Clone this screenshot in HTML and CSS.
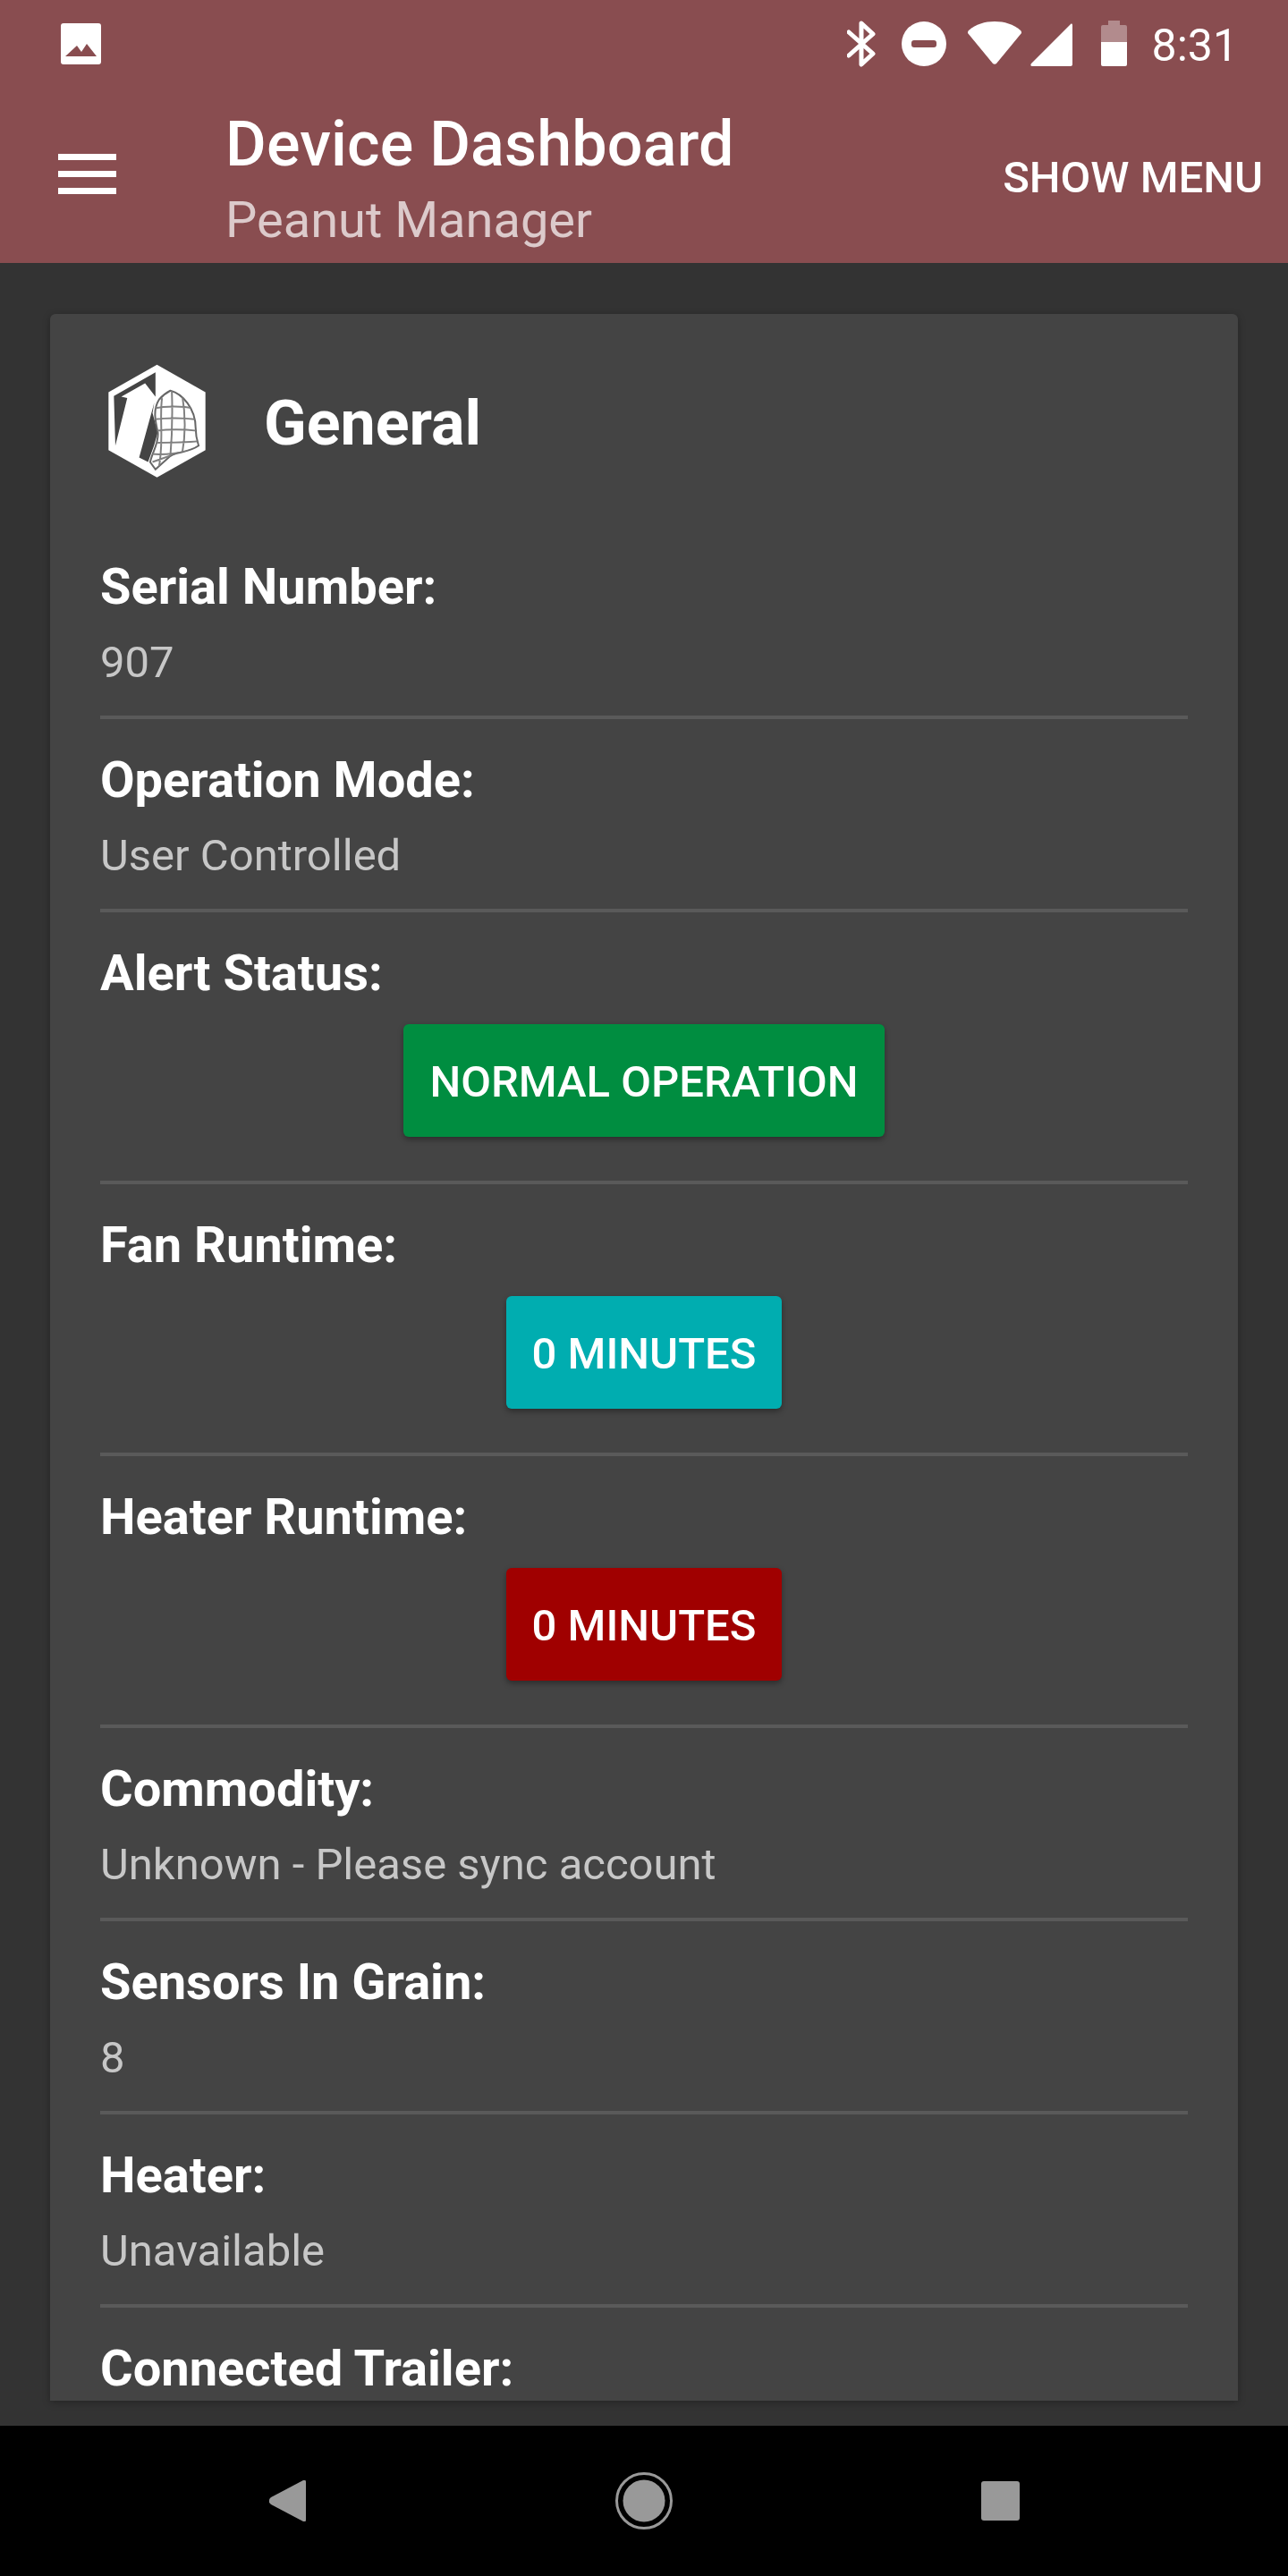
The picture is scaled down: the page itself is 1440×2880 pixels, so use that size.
FILE: index.html
```html
<!DOCTYPE html>
<html lang="en">
<head>
  <meta charset="UTF-8">
  <meta name="viewport" content="width=device-width, initial-scale=1.0">
  <title>Device Dashboard</title>
  <link rel="stylesheet" href="styles.css">
</head>
<body>
  <header class="app-header">
    <div class="status-bar">
      <svg class="status-photo" viewBox="0 0 45 46">
        <path fill="#fff" fill-rule="evenodd" d="M3 0h39a3 3 0 0 1 3 3v40a3 3 0 0 1-3 3H3a3 3 0 0 1-3-3V3a3 3 0 0 1 3-3zM5 37h35L29 23l-6 9-5-7z"/>
      </svg>
      <svg class="status-icons" viewBox="947 0 313 84">
        <path fill="none" stroke="#fff" stroke-width="5" stroke-linejoin="round" stroke-linecap="round" d="M949 36l27 24-13 12V26l13 12-27 24"/>
        <ellipse cx="1033" cy="49" rx="25" ry="25" fill="#fff"/>
        <rect x="1019" y="45" width="28" height="8" rx="3" fill="#894d50"/>
        <path fill="#fff" d="M1112 24c-11 0-21 3-29 10-1 1-1 2-1 3l28 34c1 1 3 1 4 0l28-34c0-1 0-2-1-3-8-7-18-10-29-10z"/>
        <path fill="#fff" d="M1197 27c1-1 2 0 2 1v44c0 1-1 2-2 2h-43c-2 0-2-2-1-3z"/>
        <path fill="#fff" fill-opacity=".35" d="M1239 23h13v5h6a2 2 0 0 1 2 2v17h-29V30a2 2 0 0 1 2-2h6z"/>
        <path fill="#fff" d="M1231 47h29v25a2 2 0 0 1-2 2h-25a2 2 0 0 1-2-2z"/>
      </svg>
      <span class="status-time">8:31</span>
    </div>
    <div class="toolbar">
      <div class="hamburger"><span></span><span></span><span></span></div>
      <div class="toolbar-titles">
        <h1>Device Dashboard</h1>
        <p>Peanut Manager</p>
      </div>
      <a class="toolbar-action" href="#">SHOW MENU</a>
    </div>
  </header>

  <main class="content">
    <section class="card">
      <div class="card-head">
        <svg class="card-logo" viewBox="85 70 340 390">
          <defs>
            <clipPath id="net-clip">
              <path d="M300 165c40 10 85 60 85 125 0 20 5 45 10 60-35 25-75 20-95 35l-50 45-18-25c8-35 30-65 26-100-8-35-18-75 4-110 13-15 28-25 38-30z"/>
            </clipPath>
          </defs>
          <path fill="#fff" d="M255 78l163 92v195l-163 92-163-92V170z"/>
          <path fill="#444" d="M110 183l140-80v82l-35-45-80 45 20 5-40 160z"/>
          <path fill="#444" d="M246 205l-6 35 18 65-13 45-20 55-30-15z"/>
          <path fill="#fff" stroke="#666" stroke-width="6" d="M300 165c40 10 85 60 85 125 0 20 5 45 10 60-35 25-75 20-95 35l-50 45-18-25c8-35 30-65 26-100-8-35-18-75 4-110 13-15 28-25 38-30z"/>
          <g clip-path="url(#net-clip)">
            <path fill="none" stroke="#808080" stroke-width="6" d="M240 225c45-8 100-8 145 0M240 262c50-6 100-6 150 0M250 300c45-5 95-5 140 0M250 340c45 0 95 0 145-5M235 378c40 3 80 0 125-10M240 405l70-25M305 165c2 60 2 140-5 220M272 190c-10 70 8 150-12 240M340 180c10 60 12 130 0 195"/>
          </g>
        </svg>
        <h2>General</h2>
      </div>

      <div class="row">
        <div class="row-label">Serial Number:</div>
        <div class="row-value">907</div>
      </div>
      <div class="row">
        <div class="row-label">Operation Mode:</div>
        <div class="row-value">User Controlled</div>
      </div>
      <div class="row">
        <div class="row-label">Alert Status:</div>
        <div class="badge badge-green">NORMAL OPERATION</div>
      </div>
      <div class="row">
        <div class="row-label">Fan Runtime:</div>
        <div class="badge badge-teal">0 MINUTES</div>
      </div>
      <div class="row">
        <div class="row-label">Heater Runtime:</div>
        <div class="badge badge-red">0 MINUTES</div>
      </div>
      <div class="row">
        <div class="row-label">Commodity:</div>
        <div class="row-value">Unknown - Please sync account</div>
      </div>
      <div class="row">
        <div class="row-label">Sensors In Grain:</div>
        <div class="row-value">8</div>
      </div>
      <div class="row">
        <div class="row-label">Heater:</div>
        <div class="row-value">Unavailable</div>
      </div>
      <div class="row">
        <div class="row-label">Connected Trailer:</div>
      </div>
    </section>
  </main>

  <nav class="nav-bar">
    <svg class="nav-back" viewBox="0 0 41 46"><path fill="#999" d="M38 0c2-1 3 0 3 2v42c0 2-1 3-3 2L2 27c-3-2-3-6 0-8z"/></svg>
    <svg class="nav-home" viewBox="0 0 64 64"><circle cx="32" cy="32" r="30.5" fill="none" stroke="#999" stroke-width="3"/><circle cx="32" cy="32" r="23.5" fill="#999"/></svg>
    <div class="nav-recent"></div>
  </nav>
</body>
</html>
```

FILE: styles.css
```css
* {
  box-sizing: border-box;
}
html, body {
  margin: 0;
  height: 2880px;
}
body {
  display: flex;
  flex-direction: column;
  font-family: Roboto, "Liberation Sans", sans-serif;
  background-color: #333;
  color: #fff;
  overflow: hidden;
}
.app-header {
  background-color: #894d50;
  height: 294px;
  flex: none;
}
.status-bar {
  height: 84px;
  display: flex;
  align-items: flex-start;
  padding: 0 56px 0 68px;
}
.status-photo {
  width: 45px;
  height: 46px;
  margin-top: 26px;
}
.status-icons {
  width: 313px;
  height: 84px;
  margin-left: auto;
}
.status-time {
  margin-left: 28px;
  font-size: 50px;
  line-height: 102px;
  font-weight: 400;
}
.toolbar {
  display: flex;
  height: 210px;
  padding: 0 28px 0 65px;
}
.hamburger {
  width: 65px;
  margin-top: 88px;
}
.hamburger span {
  display: block;
  height: 7px;
  background: #fff;
  margin-bottom: 12px;
}
.toolbar-titles {
  margin-left: 122px;
}
.toolbar-titles h1 {
  margin: 32px 0 0;
  font-size: 70px;
  line-height: 90px;
  font-weight: 500;
  letter-spacing: 0.2px;
}
.toolbar-titles p {
  margin: 2px 0 0;
  font-size: 56px;
  line-height: 76px;
  color: rgba(255, 255, 255, 0.7);
}
.toolbar-action {
  margin-left: auto;
  margin-top: 76px;
  font-size: 49px;
  line-height: 78px;
  font-weight: 500;
  color: #fff;
  text-decoration: none;
}
.content {
  flex: 1;
  min-height: 0;
  padding: 57px 56px 28px;
}
.card {
  height: 100%;
  overflow: hidden;
  background: #444;
  border-radius: 6px 6px 0 0;
  padding: 0 56px;
  box-shadow: 0 2px 8px rgba(0, 0, 0, 0.3);
}
.card-head {
  display: flex;
  align-items: center;
  height: 237px;
  padding-left: 7px;
}
.card-logo {
  width: 113px;
  height: 130px;
}
.card-head h2 {
  margin: 6px 0 0 63px;
  font-size: 70px;
  font-weight: 700;
}
.row {
  display: flex;
  flex-direction: column;
  border-bottom: 4px solid #5a5a5a;
  padding: 31px 0 22px;
}
.row:last-child {
  border-bottom: none;
}
.row-label {
  font-size: 56px;
  line-height: 74px;
  font-weight: 700;
}
.row-value {
  font-size: 49px;
  line-height: 74px;
  margin-top: 11px;
  color: #c7c7c7;
}
.badge {
  align-self: center;
  height: 126px;
  margin: 20px 0 27px;
  padding: 0 29px;
  border-radius: 6px;
  font-size: 49px;
  line-height: 130px;
  font-weight: 500;
  box-shadow: 0 3px 6px rgba(0, 0, 0, 0.35);
}
.badge-green {
  background: #008d40;
}
.badge-teal {
  background: #00adb0;
}
.badge-red {
  background: #a00000;
}
.nav-bar {
  flex: none;
  height: 168px;
  background: #000;
  display: flex;
  align-items: center;
  padding-left: 301px;
}
.nav-back {
  width: 41px;
  height: 46px;
}
.nav-home {
  width: 64px;
  height: 64px;
  margin-left: 346px;
  margin-top: -1px;
}
.nav-recent {
  width: 43px;
  height: 44px;
  margin-left: 345px;
  border-radius: 3px;
  background: #999;
}
```
